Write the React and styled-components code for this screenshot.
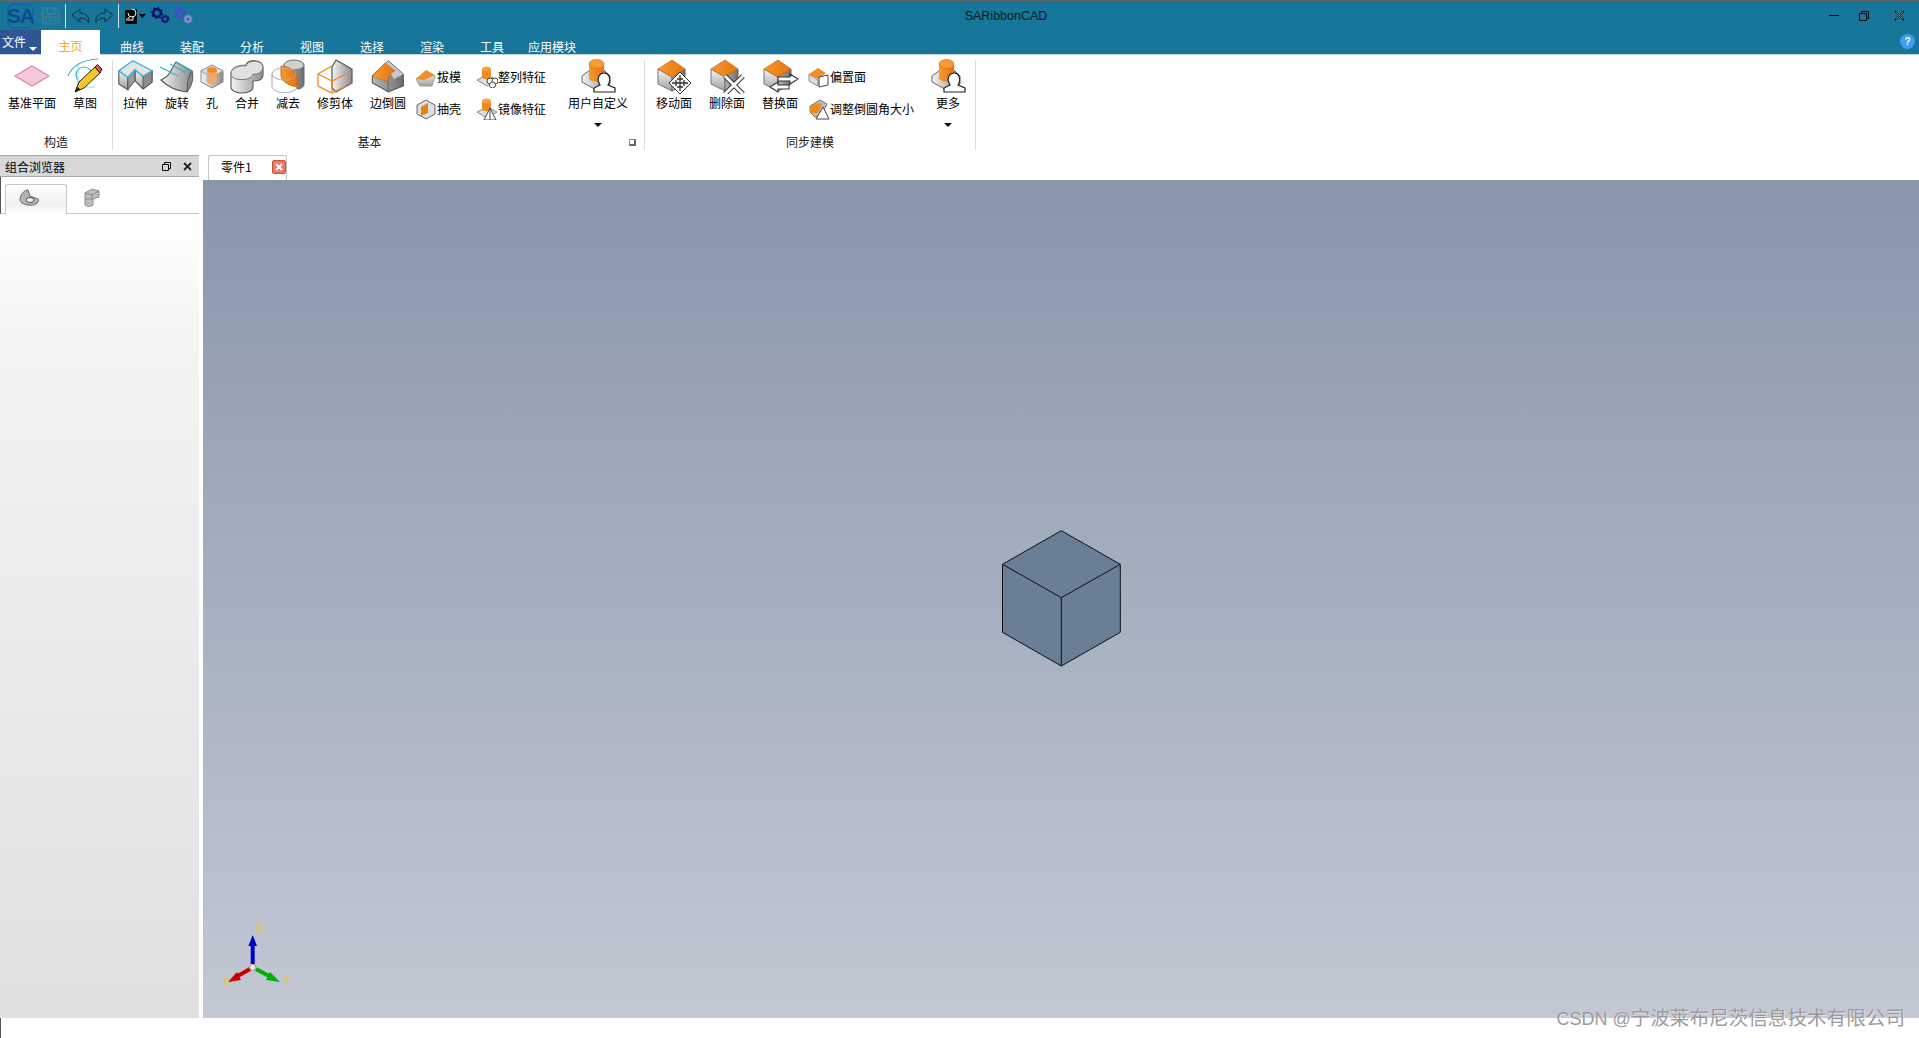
import React from 'react'
import styled, { createGlobalStyle } from 'styled-components'

const Global = createGlobalStyle`
  html, body { margin: 0; padding: 0; background: #fff; }
  body { font-family: 'Noto Sans CJK SC', 'Liberation Sans', sans-serif; font-size: 12px; color: #000; overflow: hidden; }
`
const Page = styled.div`
  position: relative;
  width: 1919px;
  height: 1038px;
  display: flex;
  flex-direction: column;
  overflow: hidden;
`
const TitleBar = styled.header`
  height: 29px;
  flex: none;
  display: flex;
  align-items: center;
  background: #17769a;
  border-top: 1px solid #666;
`
const QuickBar = styled.div`
  width: 193px;
  flex: none;
  height: 29px;
  display: flex;
  align-items: center;
  padding-left: 7px;
  box-sizing: border-box;
`
const QuickSep = styled.span`
  width: 1px;
  height: 24px;
  background: #d6e6ee;
  margin: 0 ${p => p.$right || 5}px 0 ${p => p.$left || 4}px;
`
const Title = styled.div`
  flex: 1;
  text-align: center;
  font-family: 'Liberation Sans', sans-serif;
  font-size: 12.5px;
  color: #0a1a20;
`
const WinBar = styled.div`
  display: flex;
  flex: none;
`
const WinButton = styled.button`
  width: ${p => p.$wide ? 40 : 30}px;
  height: 29px;
  padding: 0;
  border: none;
  background: none;
  display: flex;
  align-items: center;
  justify-content: center;
`
const TabRow = styled.nav`
  height: 25px;
  flex: none;
  display: flex;
  background: #17769a;
  border-bottom: 1px solid #c4d6e0;
  box-sizing: border-box;
`
const FileButton = styled.button`
  width: 41px;
  height: 24px;
  padding: 3px 0 0 2px;
  border: none;
  background: #2f5597;
  color: #fff;
  font: inherit;
  font-size: 12px;
  display: flex;
  align-items: flex-start;
  line-height: 18px;
  position: relative;
  text-align: left;
`
const FileArrow = styled.span`
  position: absolute;
  left: 29px;
  top: 17px;
  border: 4px solid transparent;
  border-top: 4px solid #fff;
  border-left-width: 4.5px;
  border-right-width: 4.5px;
`
const Tab = styled.div`
  width: ${p => p.$active ? 59 : 60}px;
  margin-right: ${p => p.$active ? 2 : 0}px;
  height: ${p => p.$active ? 25 : 24}px;
  box-sizing: border-box;
  padding-top: ${p => p.$active ? 7 : 8}px;
  line-height: 17px;
  text-align: center;
  color: ${p => p.$active ? '#f4a81e' : '#fff'};
  background: ${p => p.$active ? '#fff' : 'none'};
`
const HelpDot = styled.div`
  margin: 4px 4px 0 auto;
  width: 15px;
  height: 15px;
  border-radius: 50%;
  background: #3d9df2;
  color: #fff;
  font: bold 10px/15px 'Liberation Sans', sans-serif;
  text-align: center;
`
const Ribbon = styled.section`
  height: 95px;
  flex: none;
  display: flex;
  background: #fff;
`
const Group = styled.div`
  position: relative;
  width: ${p => p.$w}px;
  flex: none;
  box-sizing: border-box;
  padding-left: ${p => p.$pad}px;
  margin-top: 5px;
  border-right: 1px solid #dcdcdc;
  display: flex;
  flex-direction: column;
`
const GroupItems = styled.div`
  height: 74px;
  margin-top: -3px;
  display: flex;
  flex: none;
`
const GroupName = styled.div`
  height: 19px;
  padding-top: 1px;
  line-height: 19px;
  text-align: center;
  margin-left: -${p => p.$pad}px;
  margin-right: ${p => p.$shift || 0}px;
  color: #222;
`
const Launcher = styled.div`
  position: absolute;
  right: 8px;
  bottom: 4px;
  width: 7px;
  height: 7px;
  border-left: 1px solid #888;
  border-top: 1px solid #888;
  border-right: 2px solid #666;
  border-bottom: 2px solid #666;
  box-sizing: border-box;
`
const LargeButton = styled.div`
  width: ${p => p.$w}px;
  flex: none;
  display: flex;
  flex-direction: column;
  align-items: center;
`
const IconBox = styled.div`
  height: 38px;
  display: flex;
  align-items: center;
  justify-content: center;
`
const Label = styled.div`
  line-height: 16px;
  white-space: nowrap;
`
const DownArrow = styled.span`
  margin-top: 12px;
  border: 4px solid transparent;
  border-top: 4px solid #111;
`
const SmallColumn = styled.div`
  width: ${p => p.$w}px;
  flex: none;
  box-sizing: border-box;
  padding: 8px 0 0 ${p => p.$pad || 0}px;
  display: flex;
  flex-direction: column;
  gap: 9px;
`
const SmallRow = styled.div`
  height: 23px;
  display: flex;
  align-items: center;
  white-space: nowrap;
`
const Main = styled.main`
  flex: 1;
  display: flex;
  margin-top: 5px;
  min-height: 0;
`
const Dock = styled.aside`
  width: 199px;
  flex: none;
  display: flex;
  flex-direction: column;
  margin-right: 4px;
`
const DockTitle = styled.div`
  height: 22px;
  flex: none;
  box-sizing: border-box;
  display: flex;
  align-items: center;
  padding: 0 1px 0 5px;
  background: #d8d8d8;
  border-top: 1px solid #a8a8a8;
  border-bottom: 1px solid #a8a8a8;
`
const DockTitleText = styled.span`
  flex: 1;
`
const DockIcon = styled.span`
  width: 21px;
  display: flex;
  justify-content: center;
`
const DockTabs = styled.div`
  height: 37px;
  flex: none;
  box-sizing: border-box;
  display: flex;
  padding: 7px 0 0 4px;
  border-bottom: 1px solid #c8c8c8;
  border-left: 1px solid #555;
`
const DockTab = styled.div`
  width: ${p => p.$active ? 62 : 64}px;
  height: ${p => p.$active ? 30 : 29}px;
  box-sizing: border-box;
  display: flex;
  align-items: center;
  padding: 0 0 3px ${p => p.$active ? 12 : 17}px;
  border: ${p => p.$active ? '1px solid #c8c8c8' : 'none'};
  border-bottom: none;
  border-radius: 3px 3px 0 0;
  background: ${p => p.$active ? 'linear-gradient(#ffffff, #f0f0f0 70%, #ffffff)' : 'none'};
`
const DockBody = styled.div`
  flex: 1;
  background: linear-gradient(#ffffff, #f4f4f4 15%, #e0e0e0);
`
const Work = styled.div`
  flex: 1;
  display: flex;
  flex-direction: column;
  min-width: 0;
`
const DocTabs = styled.div`
  height: 25px;
  flex: none;
  padding-left: 5px;
  display: flex;
`
const DocTab = styled.div`
  width: 79px;
  box-sizing: border-box;
  border: 1px solid #c4c4c4;
  border-bottom: none;
  border-radius: 3px 3px 0 0;
  display: flex;
  align-items: center;
  justify-content: space-between;
  padding: 0 0 3px 12px;
  font-size: 12px;
  white-space: nowrap;
`
const DocClose = styled.span`
  width: 14px;
  height: 14px;
  flex: none;
  box-sizing: border-box;
  background: #ee7a62;
  border: 1px solid #c9513c;
  border-radius: 2px;
  display: flex;
  align-items: center;
  justify-content: center;
`
const Viewport = styled.div`
  position: relative;
  flex: 1;
  background: linear-gradient(#8997ab, #c3c8d4);
`
const CubeSvg = styled.svg`
  position: absolute;
  left: 797px;
  top: 349px;
`
const TriadSvg = styled.svg`
  position: absolute;
  left: 0;
  bottom: 0;
`
const StatusBar = styled.footer`
  height: 20px;
  flex: none;
  background: #fff;
  border-left: 1px solid #555;
`
const Watermark = styled.div`
  position: absolute;
  right: 14px;
  bottom: 5px;
  font-family: 'Liberation Sans', 'Noto Sans CJK SC', sans-serif;
  font-size: 19.6px;
  line-height: 28px;
  color: #9b9b9b;
  text-shadow: 1px 1px 1px rgba(255, 255, 255, 0.55);
  white-space: nowrap;
`
const WatermarkLatin = styled.span`
  font-size: 18px;
`
const Crumb = styled.span`
  margin-left: ${p => p.$left}px;
  display: flex;
`

const Defs = () => (
  <svg width="0" height="0" style={{ position: 'absolute' }}>
    <defs>
      <linearGradient id="grey" x1="0" x2="1" y1="0" y2="0">
        <stop offset="0" stopColor="#f4f4f4" />
        <stop offset="1" stopColor="#8c8c8c" />
      </linearGradient>
      <linearGradient id="greyDown" x1="0" x2="0" y1="0" y2="1">
        <stop offset="0" stopColor="#f6f6f6" />
        <stop offset="1" stopColor="#a0a0a0" />
      </linearGradient>
      <linearGradient id="greyDark" x1="0" x2="1" y1="0" y2="0">
        <stop offset="0" stopColor="#b8b8b8" />
        <stop offset="1" stopColor="#6c6c6c" />
      </linearGradient>
      <linearGradient id="orange" x1="0" x2="1" y1="0" y2="0">
        <stop offset="0" stopColor="#f59a34" />
        <stop offset="1" stopColor="#e5740e" />
      </linearGradient>
    </defs>
  </svg>
)

const Ico = ({ w = 36, h = 36, children }) => (
  <svg width={w} height={h} viewBox={`0 0 ${w} ${h}`}>{children}</svg>
)

const Plane = () => (
  <Ico>
    <polygon points="1,18 18,8 35,18 18,28" fill="#f6c8dd" stroke="#e47fa2" strokeWidth="1.2" />
  </Ico>
)
const Sketch = () => (
  <Ico>
    <path d="M1 18C5 8 15 2 31 1" fill="none" stroke="#2fb4d8" strokeWidth="1.2" />
    <circle cx="17" cy="17" r="8" fill="none" stroke="#2fb4d8" strokeWidth="1.2" />
    <path d="M11 6V29H28" fill="none" stroke="#8fd6ea" strokeWidth="1" />
    <polygon points="8,34 12,24 28,9 33,15 17,30" fill="#f7c52e" stroke="#222" strokeWidth="1" />
    <polygon points="28,9 30.5,6.5 35,11 33,15" fill="#d9534f" stroke="#222" strokeWidth="1" />
    <polygon points="8,34 10,28.5 13.5,31.5" fill="#222" />
  </Ico>
)
const Extrude = () => (
  <Ico>
    <polygon points="1.8,12.7 1.8,26 10.8,31.7 10.8,19.3 18,11.7 18,22.7 26,31 35,24.3 35,12.7 26,18.3 18,11.7" fill="url(#greyDown)" stroke="#555" strokeWidth="1.1" />
    <polygon points="26,18.3 35,12.7 35,24.3 26,31" fill="#8d8d8d" stroke="#555" />
    <polygon points="10.8,19.3 18,11.7 18,22.7 10.8,31.7" fill="#9a9a9a" stroke="#555" />
    <polygon points="1.8,12.7 15.8,2.7 35,12.7 26,18.3 18,11.7 10.8,19.3" fill="#e4e4e4" stroke="#2fb4d8" strokeWidth="1.3" />
  </Ico>
)
const Revolve = () => (
  <Ico>
    <path d="M2 22C12 18 12 10 17 4L33 13C28 20 30 26 28 34C18 33 8 28 2 22Z" fill="url(#grey)" stroke="#555" strokeWidth="1.1" />
    <path d="M28 34C29 26 28 20 33 13C35 20 33 28 28 34Z" fill="#8a8a8a" stroke="#555" />
    <path d="M17 4L33 13M11 6L27 15M1 9L19 18" stroke="#2fb4d8" strokeWidth="1.3" fill="none" />
  </Ico>
)
const Hole = () => (
  <Ico w={24} h={28}>
    <polygon points="12,3 23,9 23,20 12,26 1,20 1,9" fill="url(#grey)" stroke="#888" />
    <polygon points="12,3 23,9 12,15 1,9" fill="#e2e2e2" stroke="#999" />
    <path d="M7 8V19C7 23 17 23 17 19V8Z" fill="#e9a873" />
    <ellipse cx="12" cy="8" rx="5" ry="3" fill="#f28c1e" />
  </Ico>
)
const Union = () => (
  <Ico>
    <path d="M2 16V29C2 37 24 37 24 29V23C32 23 34 20 34 17V9C34 1 18 1 17 7C9 7 2 10 2 16Z" fill="url(#grey)" stroke="#666" strokeWidth="1.2" />
    <path d="M2 16C2 9 12 7 17 8C18 1 34 2 34 9C34 14 28 17 24 16C24 23 2 24 2 16Z" fill="#e0e0e0" stroke="#777" />
  </Ico>
)
const Subtract = () => (
  <Ico>
    <path d="M14 7C16 1 34 1 34 8V26C34 30 29 31 27 31V20C27 14 20 9 14 9Z" fill="url(#greyDark)" stroke="#666" />
    <ellipse cx="24" cy="7" rx="10" ry="5" fill="#cfcfcf" stroke="#777" />
    <path d="M11 8C18 8 27 13 27 20V29C20 28 12 24 11 18Z" fill="url(#orange)" stroke="#d9690a" />
    <ellipse cx="14" cy="16" rx="12" ry="6" fill="none" stroke="#aaa" />
    <path d="M2 16V28C2 36 22 37 27 30" fill="none" stroke="#aaa" />
  </Ico>
)
const Trim = () => (
  <Ico>
    <polygon points="19,2 35,11 35,25 19,34 15,30 15,9" fill="url(#grey)" stroke="#555" strokeWidth="1.2" />
    <path d="M15 8L1 16V28L15 35L29 28M1 16L15 23L29 16M15 23V35" fill="none" stroke="#ef8a1e" strokeWidth="1.3" />
  </Ico>
)
const Fillet = () => (
  <Ico>
    <path d="M2.3 18L18.3 3L33.3 16.3V28L18.3 34L2.3 24.7Z" fill="url(#greyDark)" stroke="#555" strokeWidth="1.1" />
    <polygon points="18.3,3 33.3,16.3 24,21 15,6" fill="#c8c8c8" />
    <path d="M2.3 18L15 5L25 13C20 15 18 18 18 23C12 23 6 20 2.3 18Z" fill="url(#orange)" stroke="#c96508" strokeWidth="0.6" />
    <path d="M18 23V34" stroke="#666" />
  </Ico>
)

const OrangeCube = ({ children }) => (
  <Ico w={38} h={36}>
    <polygon points="3,11 17,19 17,33 3,26" fill="url(#greyDown)" stroke="#777" />
    <polygon points="17,19 30,11 30,26 17,33" fill="url(#greyDark)" stroke="#666" />
    <polygon points="17,2 30,11 17,19 3,11" fill="url(#orange)" stroke="#c96508" strokeWidth="0.7" />
    {children}
  </Ico>
)
const MoveFace = () => (
  <OrangeCube>
    <polygon points="25,14 36,25 25,36 14,25" fill="#fff" stroke="#333" />
    <path d="M25 17V33M17 25H33M22 21H28M22 29H28M21 22V28M29 22V28" stroke="#333" strokeWidth="1.3" />
  </OrangeCube>
)
const DeleteFace = () => (
  <OrangeCube>
    <path d="M17 18L35 36M35 18L17 36" stroke="#333" strokeWidth="5" />
    <path d="M17 18L35 36M35 18L17 36" stroke="#fff" strokeWidth="3" />
  </OrangeCube>
)
const ReplaceFace = () => (
  <OrangeCube>
    <path d="M17 19H29V16L37 21L29 26V23H17ZM9 29L17 24V27H28V31H17V34Z" fill="#fff" stroke="#333" strokeWidth="1.1" />
  </OrangeCube>
)
const UserBase = () => (
  <Ico w={36} h={36}>
    <polygon points="2,18 10,12 24,12 30,18 30,26 18,33 2,24" fill="url(#grey)" stroke="#666" />
    <path d="M9 6V20C9 25 24 25 24 20V6Z" fill="url(#orange)" />
    <ellipse cx="16.5" cy="6" rx="7.5" ry="4.5" fill="#f59a34" stroke="#d9690a" strokeWidth="0.6" />
    <path d="M14 34V30L20 27C18 24 18 20 19 18C21 14 27 14 29 18C30 21 30 24 28 27L35 30V34Z" fill="#fff" stroke="#222" strokeWidth="1.2" />
  </Ico>
)

const SmallBlock = ({ children }) => (
  <Ico w={22} h={22}>{children}</Ico>
)
const Draft = () => (
  <SmallBlock>
    <polygon points="1,13 5,20 17,20 20,10 11,6" fill="url(#greyDown)" stroke="#999" />
    <polygon points="1,13 11,4 20,9 9,14" fill="#f08f26" />
  </SmallBlock>
)
const Shell = () => (
  <SmallBlock>
    <polygon points="2,7 11,2 20,7 20,16 11,21 2,16" fill="#ddd" stroke="#666" />
    <polygon points="6,9 13,5 13,15 6,18" fill="#e8801a" />
  </SmallBlock>
)
const Pattern = () => (
  <SmallBlock>
    <polygon points="1,14 11,9 21,14 11,20" fill="#ddd" stroke="#888" />
    <path d="M6 3V11C6 14 15 14 15 11V3Z" fill="#ef8a1e" />
    <ellipse cx="10.5" cy="3" rx="4.5" ry="2.5" fill="#f5a040" />
    <circle cx="14" cy="15" r="3" fill="#fff" stroke="#444" />
    <circle cx="19" cy="15" r="3" fill="#fff" stroke="#444" />
    <circle cx="16.5" cy="19" r="3" fill="#fff" stroke="#444" />
  </SmallBlock>
)
const Mirror = () => (
  <SmallBlock>
    <polygon points="1,14 11,9 21,14 11,20" fill="#ddd" stroke="#888" />
    <path d="M6 3V11C6 14 15 14 15 11V3Z" fill="#ef8a1e" />
    <ellipse cx="10.5" cy="3" rx="4.5" ry="2.5" fill="#f5a040" />
    <path d="M14 10L8 22H20ZM14 10V22" fill="#fff" stroke="#444" />
  </SmallBlock>
)
const Offset = () => (
  <SmallBlock>
    <polygon points="1,8 10,14 10,20 1,15" fill="#ddd" stroke="#888" />
    <polygon points="1,8 10,2 18,7 10,13" fill="#f08f26" />
    <polygon points="11,11 20,9 20,19 11,21" fill="#fff" stroke="#444" />
  </SmallBlock>
)
const Resize = () => (
  <SmallBlock>
    <polygon points="2,8 12,2 19,6 14,17 7,19 2,14" fill="#bbb" stroke="#777" />
    <path d="M2 8C6 6 10 4 14 6L10 15C7 16 4 15 2 14Z" fill="#ef8a1e" />
    <path d="M15 9L8 21H21Z" fill="#fff" stroke="#444" />
  </SmallBlock>
)

const Logo = () => (
  <svg width="27" height="26" viewBox="0 0 27 26">
    <rect x="1" y="1" width="25" height="24" rx="5" fill="none" stroke="#0f5a9c" />
    <text x="13.5" y="20.5" textAnchor="middle" fontFamily="Liberation Sans" fontWeight="bold" fontSize="21" letterSpacing="-1" fill="#0b4a94">SA</text>
  </svg>
)
const Save = () => (
  <svg width="20" height="20" viewBox="0 0 20 20" style={{ marginLeft: 7 }}>
    <path d="M2 2H15L18 5V18H2ZM6 2V8H14V2M5 18V11H15V18M7 14H13" fill="none" stroke="#3d7f96" strokeWidth="1.4" />
  </svg>
)
const Undo = ({ flip }) => (
  <svg width="20" height="16" viewBox="0 0 20 16" style={{ transform: flip ? 'scaleX(-1)' : 'none', marginRight: flip ? 0 : 4 }}>
    <path d="M1 7L9 1V5C15 5 19 9 18 15C16 11 13 10 9 10V14Z" fill="none" stroke="#10303c" strokeWidth="1" />
  </svg>
)
const ReportIcon = () => (
  <svg width="22" height="16" viewBox="0 0 22 16">
    <path d="M1 2H8L13 1V16H1Z" fill="#000" />
    <path d="M8 1A4 4 0 1 1 4 5" fill="none" stroke="#fff" />
    <path d="M3 13V10M5 13V9M7 13V11M9 13V8" stroke="#fff" />
    <polygon points="15,6 22,6 18.5,10" fill="#000" />
  </svg>
)
const Gears = ({ c1, c2 }) => (
  <svg width="19" height="17" viewBox="0 0 19 17">
    <circle cx="6" cy="6" r="3.8" fill="none" stroke={c1} strokeWidth="2.6" />
    <circle cx="6" cy="6" r="5.2" fill="none" stroke={c1} strokeWidth="1.6" strokeDasharray="2 2" />
    <circle cx="14" cy="12" r="2.6" fill="none" stroke={c2} strokeWidth="2" />
    <circle cx="14" cy="12" r="3.8" fill="none" stroke={c2} strokeWidth="1.3" strokeDasharray="1.5 1.5" />
  </svg>
)

const tabs = ['曲线', '装配', '分析', '视图', '选择', '渲染', '工具', '应用模块']

const Large = ({ w, icon, label, menu }) => (
  <LargeButton $w={w}>
    <IconBox>{icon}</IconBox>
    <Label>{label}</Label>
    {menu && <DownArrow />}
  </LargeButton>
)
const Small = ({ icon, label }) => (
  <SmallRow>{icon}<span>{label}</span></SmallRow>
)

export default function App() {
  return (
    <Page>
      <Global />
      <Defs />
      <TitleBar>
        <QuickBar>
          <Logo />
          <Save />
          <QuickSep />
          <Undo />
          <Undo flip />
          <QuickSep />
          <ReportIcon />
          <Crumb $left={5}><Gears c1="#12126e" c2="#1a1a80" /></Crumb>
          <Crumb $left={4}><Gears c1="#4a4ac8" c2="#8b8bd0" /></Crumb>
        </QuickBar>
        <Title>SARibbonCAD</Title>
        <WinBar>
          <WinButton>
            <svg width="10" height="2"><rect width="10" height="1" fill="#000" /></svg>
          </WinButton>
          <WinButton>
            <svg width="10" height="10" viewBox="0 0 10 10">
              <path d="M2.5 2.5V.5H9.5V7.5H7.5M.5 2.5H7.5V9.5H.5Z" fill="none" stroke="#000" />
            </svg>
          </WinButton>
          <WinButton $wide>
            <svg width="11" height="11" viewBox="0 0 11 11">
              <path d="M1 1L10 10M10 1L1 10" stroke="#000" strokeWidth="1.5" />
              <path d="M2 2L9 9M9 2L2 9" stroke="#e8eef0" strokeWidth="0.5" />
            </svg>
          </WinButton>
        </WinBar>
      </TitleBar>
      <TabRow>
        <FileButton>文件<FileArrow /></FileButton>
        <Tab $active>主页</Tab>
        {tabs.map(t => <Tab key={t}>{t}</Tab>)}
        <HelpDot>?</HelpDot>
      </TabRow>
      <Ribbon>
        <Group $w={113} $pad={4}>
          <GroupItems>
            <Large w={56} icon={<Plane />} label="基准平面" />
            <Large w={50} icon={<Sketch />} label="草图" />
          </GroupItems>
          <GroupName $pad={4}>构造</GroupName>
        </Group>
        <Group $w={532} $pad={1}>
          <GroupItems>
            <Large w={42} icon={<Extrude />} label="拉伸" />
            <Large w={42} icon={<Revolve />} label="旋转" />
            <Large w={28} icon={<Hole />} label="孔" />
            <Large w={42} icon={<Union />} label="合并" />
            <Large w={40} icon={<Subtract />} label="减去" />
            <Large w={54} icon={<Trim />} label="修剪体" />
            <Large w={52} icon={<Fillet />} label="边倒圆" />
            <SmallColumn $w={62} $pad={1}>
              <Small icon={<Draft />} label="拔模" />
              <Small icon={<Shell />} label="抽壳" />
            </SmallColumn>
            <SmallColumn $w={91}>
              <Small icon={<Pattern />} label="整列特征" />
              <Small icon={<Mirror />} label="镜像特征" />
            </SmallColumn>
            <Large w={62} icon={<UserBase />} label="用户自定义" menu />
          </GroupItems>
          <GroupName $pad={1} $shift={18}>基本</GroupName>
          <Launcher />
        </Group>
        <Group $w={331} $pad={3}>
          <GroupItems>
            <Large w={52} icon={<MoveFace />} label="移动面" />
            <Large w={54} icon={<DeleteFace />} label="删除面" />
            <Large w={52} icon={<ReplaceFace />} label="替换面" />
            <SmallColumn $w={120} $pad={2}>
              <Small icon={<Offset />} label="偏置面" />
              <Small icon={<Resize />} label="调整倒圆角大小" />
            </SmallColumn>
            <Large w={44} icon={<UserBase />} label="更多" menu />
          </GroupItems>
          <GroupName $pad={3}>同步建模</GroupName>
        </Group>
      </Ribbon>
      <Main>
        <Dock>
          <DockTitle>
            <DockTitleText>组合浏览器</DockTitleText>
            <DockIcon>
              <svg width="9" height="9" viewBox="0 0 9 9">
                <path d="M2.5 2V.5H8.5V6.5H7M.5 2.5H6.5V8.5H.5Z" fill="none" stroke="#111" />
              </svg>
            </DockIcon>
            <DockIcon>
              <svg width="9" height="9" viewBox="0 0 9 9">
                <path d="M1 1L8 8M8 1L1 8" stroke="#222" strokeWidth="1.8" />
              </svg>
            </DockIcon>
          </DockTitle>
          <DockTabs>
            <DockTab $active>
              <svg width="22" height="18" viewBox="0 0 22 18">
                <path d="M2 10C3 4 7 1 10 1L12 7L20 10C22 14 16 17 10 16C5 15 2 14 2 10Z" fill="#b4b4b4" stroke="#666" />
                <ellipse cx="12" cy="11" rx="4" ry="2.5" fill="#eee" stroke="#555" />
              </svg>
            </DockTab>
            <DockTab>
              <svg width="16" height="20" viewBox="0 0 16 20">
                <path d="M1 6L8 2L15 4V10L9 12V18L5 20L1 18Z" fill="#bdbdbd" stroke="#8c8c8c" />
                <path d="M1 6L8 8L15 4M8 8V12M1 12L9 12" fill="none" stroke="#8c8c8c" />
              </svg>
            </DockTab>
          </DockTabs>
          <DockBody />
        </Dock>
        <Work>
          <DocTabs>
            <DocTab>
              零件1
              <DocClose>
                <svg width="8" height="8" viewBox="0 0 8 8">
                  <path d="M1 1L7 7M7 1L1 7" stroke="#fff" strokeWidth="2" />
                </svg>
              </DocClose>
            </DocTab>
          </DocTabs>
          <Viewport>
            <CubeSvg width="122" height="140" viewBox="0 0 122 140">
              <path d="M61.3 1.7L120.3 35.3V103.3L61.3 137L2.5 103.3V35.3Z" fill="#6a7f95" stroke="#0a0f14" />
              <path d="M2.5 35.3L61.3 68.7L120.3 35.3M61.3 68.7V137" fill="none" stroke="#0a0f14" />
            </CubeSvg>
            <TriadSvg width="100" height="100" viewBox="0 0 100 100">
              <path d="M49.7 46V26" stroke="#0000c8" strokeWidth="4" />
              <polygon points="49.7,17 54,28 45.4,28" fill="#0000c8" />
              <path d="M47 51L33 59" stroke="#c80000" strokeWidth="4" />
              <polygon points="25,64 34,54 38,62" fill="#c80000" />
              <path d="M53 51L66 58" stroke="#00b000" strokeWidth="4" />
              <polygon points="77,64 63,62 67,54" fill="#00b000" />
              <circle cx="49.7" cy="49.3" r="3" fill="#eee" stroke="#999" />
              <text x="56.7" y="13" textAnchor="middle" fontFamily="Liberation Sans" fontSize="11" fill="none" stroke="#e8c840" strokeWidth="0.6">Z</text>
              <text x="23.7" y="68" textAnchor="middle" fontFamily="Liberation Sans" fontSize="11" fill="none" stroke="#e8c840" strokeWidth="0.6">X</text>
              <text x="84" y="65" textAnchor="middle" fontFamily="Liberation Sans" fontSize="11" fill="none" stroke="#e8c840" strokeWidth="0.6">Y</text>
            </TriadSvg>
          </Viewport>
        </Work>
      </Main>
      <StatusBar />
      <Watermark><WatermarkLatin>CSDN @</WatermarkLatin>宁波莱布尼茨信息技术有限公司</Watermark>
    </Page>
  )
}
